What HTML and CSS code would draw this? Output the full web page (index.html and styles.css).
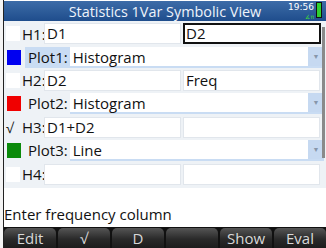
FILE: index.html
```html
<!DOCTYPE html>
<html lang="en">

<head>
    <meta charset="UTF-8">
    <meta name="viewport" content="width=device-width, initial-scale=1.0">
    <title>Statistics 1Var Symbolic View</title>
    <link rel="stylesheet" href="styles.css">
</head>

<body>
    <div class="screen">
        <div class="titlebar">
            <span class="title">Statistics 1Var Symbolic View</span>
            <div class="status">
                <div class="clock">
                    <span class="time">19:56</span>
                    <span class="mode">∡π</span>
                </div>
                <div class="battery"></div>
            </div>
        </div>

        <div class="body">
            <div class="rows">
                <div class="row hrow">
                    <span class="check"></span>
                    <span class="label">H1:</span>
                    <span class="field">D1</span>
                    <span class="field selected">D2</span>
                </div>
                <div class="row prow">
                    <span class="swatch blue"></span>
                    <span class="label active">Plot1:</span>
                    <span class="drop">Histogram<span class="arrow">▼</span></span>
                </div>
                <div class="row hrow">
                    <span class="check"></span>
                    <span class="label">H2:</span>
                    <span class="field">D2</span>
                    <span class="field">Freq</span>
                </div>
                <div class="row prow">
                    <span class="swatch red"></span>
                    <span class="label">Plot2:</span>
                    <span class="drop">Histogram<span class="arrow">▼</span></span>
                </div>
                <div class="row hrow">
                    <span class="check on">√</span>
                    <span class="label">H3:</span>
                    <span class="field">D1+D2</span>
                    <span class="field"></span>
                </div>
                <div class="row prow">
                    <span class="swatch green"></span>
                    <span class="label">Plot3:</span>
                    <span class="drop">Line<span class="arrow">▼</span></span>
                </div>
                <div class="row hrow">
                    <span class="check"></span>
                    <span class="label">H4:</span>
                    <span class="field"></span>
                    <span class="field"></span>
                </div>
            </div>
            <div class="scrollbar"></div>
        </div>

        <div class="help">Enter frequency column</div>

        <div class="menu">
            <span class="key">Edit</span>
            <span class="key">√</span>
            <span class="key">D</span>
            <span class="key"></span>
            <span class="key">Show</span>
            <span class="key">Eval</span>
        </div>
    </div>
</body>

</html>
```

FILE: styles.css
```css
* {
    box-sizing: border-box;
    font-family: "Open Sans", "Noto Sans", sans-serif;
}

body {
    margin: 0;
    background-color: #f4f4f4;
}

.screen {
    margin-left: 3px;
    width: 323px;
    height: 248px;
    border-left: 1px solid #222;
    background-color: #fff;
    display: flex;
    flex-direction: column;
}

.titlebar {
    height: 20px;
    margin-top: 1px;
    background: linear-gradient(#3d6ca8, #1f4d8c);
    display: flex;
    align-items: center;
    justify-content: center;
    position: relative;
}

.title {
    color: #eef3fb;
    font-size: 14.4px;
    line-height: 19px;
}

.status {
    position: absolute;
    right: 4px;
    top: 1px;
    display: flex;
    gap: 2px;
}

.clock {
    display: flex;
    flex-direction: column;
    align-items: flex-end;
}

.time {
    color: #fff;
    font-family: "DejaVu Sans", sans-serif;
    font-size: 9px;
    line-height: 10px;
}

.mode {
    margin-top: 1px;
    color: #3cd43c;
    font-family: "DejaVu Sans", sans-serif;
    font-size: 6px;
    line-height: 7px;
}

.battery {
    width: 6px;
    height: 16px;
    border: 1px solid #111;
    background-color: #2fd12f;
}

.body {
    position: relative;
    background-color: #eef2f6;
}

.rows {
    padding: 1px 0 2px 0;
}

.row {
    height: 23.4px;
    display: flex;
    align-items: center;
    font-size: 15px;
    color: #111;
}

.check {
    width: 14px;
    height: 15px;
    margin-left: 2px;
    background-color: #fff;
    font-size: 14px;
    line-height: 15px;
}

.check.on {
    background-color: transparent;
    color: #222;
}

.hrow .label {
    width: 22px;
    margin-left: 2px;
}

.field {
    height: 21px;
    background-color: #fff;
    border: 1px solid #e1e6ec;
    padding-left: 2px;
    line-height: 19px;
    width: 137px;
    margin-right: 2px;
}

.field.selected {
    border: 2px solid #111;
    line-height: 17px;
    padding-left: 1px;
    width: 138px;
}

.swatch {
    width: 14px;
    height: 15px;
    margin-left: 3px;
}

.blue {
    background-color: #0000f0;
}

.red {
    background-color: #f00000;
}

.green {
    background-color: #0b8a0b;
}

.prow .label {
    margin-left: 4px;
    padding: 0 2px 0 3px;
    height: 21px;
    line-height: 21px;
}

.prow .label.active {
    background-color: #c9dcf3;
}

.drop {
    flex: 1;
    margin-right: 2px;
    height: 21px;
    background-color: #fff;
    border-bottom: 2px solid #c9dcf3;
    padding-left: 3px;
    line-height: 20px;
    position: relative;
}

.arrow {
    position: absolute;
    right: 0;
    top: 0;
    width: 16px;
    height: 19px;
    background-color: #c6d9f1;
    color: #8796aa;
    font-size: 7px;
    line-height: 19px;
    text-align: center;
}

.scrollbar {
    position: absolute;
    right: 1px;
    top: 6px;
    width: 3px;
    height: 131px;
    background-color: #8a8a8a;
}

.help {
    margin-top: auto;
    font-size: 15px;
    color: #111;
    line-height: 18px;
    margin-bottom: 4px;
}

.menu {
    height: 21px;
    background-color: #111;
    display: flex;
    gap: 2px;
    padding-top: 1px;
}

.key {
    flex: 1;
    border-radius: 5px 5px 0 0;
    background: linear-gradient(#555, #2a2a2a 55%, #1c1c1c);
    color: #d8d8d8;
    font-size: 15px;
    line-height: 20px;
    text-align: center;
}
```
